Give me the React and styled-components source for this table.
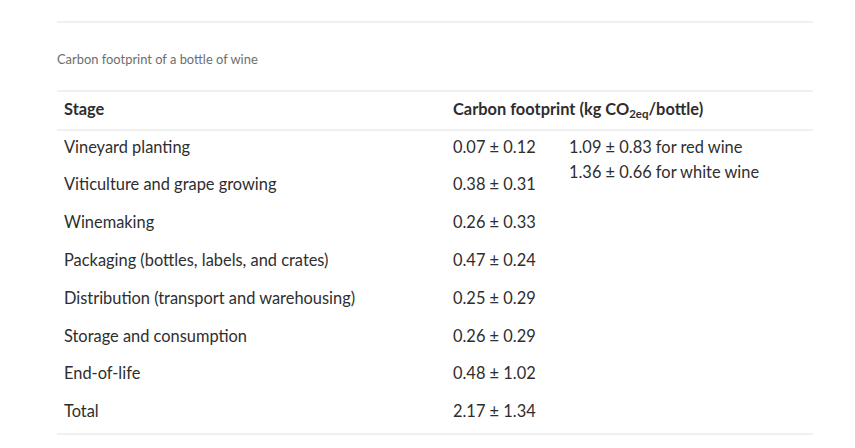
import React from "react";
import styled, { createGlobalStyle } from "styled-components";

const Global = createGlobalStyle`
    body {
        margin: 0;
        background: #fff;
        font-family: Lato, "Open Sans", sans-serif;
        color: #2e2e2e;
    }
`;

const Page = styled.div`
    width: 756px;
    margin: 0 0 0 57px;
    padding-top: 21px;
`;
const Rule = styled.div`
    height: 2px;
    background: #f0f0f0;
`;
const Caption = styled.div`
    margin-top: 28px;
    font-size: 12.9px;
    line-height: 16px;
    color: #6e6e6e;
`;
const Table = styled.table`
    width: 100%;
    margin-top: 23px;
    border-collapse: collapse;
    text-align: left;
    font-size: 16.4px;
    line-height: 25.6px;
    border-top: 2px solid #f0f0f0;
    border-bottom: 2px solid #f0f0f0;
`;
const TH = styled.th`
    font-weight: 700;
    padding: 4px 7px 7px;
    color: #2e2e2e;
    border-bottom: 2px solid #f0f0f0;
    width: ${p => p.$w || "auto"};
`;
const TD = styled.td`
    padding: 3px 7px 9.2px;
    vertical-align: top;
    color: #2e2e2e;
    width: ${p => p.$w || "auto"};
`;
const Sub = styled.sub`
    font-size: 0.7em;
    vertical-align: -0.25em;
    line-height: 0;
`;

const rows = [
    ["Vineyard planting", "0.07 ± 0.12"],
    ["Viticulture and grape growing", "0.38 ± 0.31"],
    ["Winemaking", "0.26 ± 0.33"],
    ["Packaging (bottles, labels, and crates)", "0.47 ± 0.24"],
    ["Distribution (transport and warehousing)", "0.25 ± 0.29"],
    ["Storage and consumption", "0.26 ± 0.29"],
    ["End-of-life", "0.48 ± 1.02"],
    ["Total", "2.17 ± 1.34"],
];

export default function App() {
    return <>
        <Global />
        <Page>
            <Rule />
            <Caption>Carbon footprint of a bottle of wine</Caption>
            <Table>
                <thead>
                    <tr>
                        <TH $w="375px">Stage</TH>
                        <TH colSpan={2}>Carbon footprint (kg CO<Sub>2eq</Sub>/bottle)</TH>
                    </tr>
                </thead>
                <tbody>
                    {rows.map((r, i) => <tr key={r[0]}>
                        <TD>{r[0]}</TD>
                        <TD $w="102px">{r[1]}</TD>
                        {i === 0
                            ? <TD rowSpan={7}>1.09 ± 0.83 for red wine<br />1.36 ± 0.66 for white wine</TD>
                            : null}
                        {i === 7 ? <TD /> : null}
                    </tr>)}
                </tbody>
            </Table>
        </Page>
    </>;
}
